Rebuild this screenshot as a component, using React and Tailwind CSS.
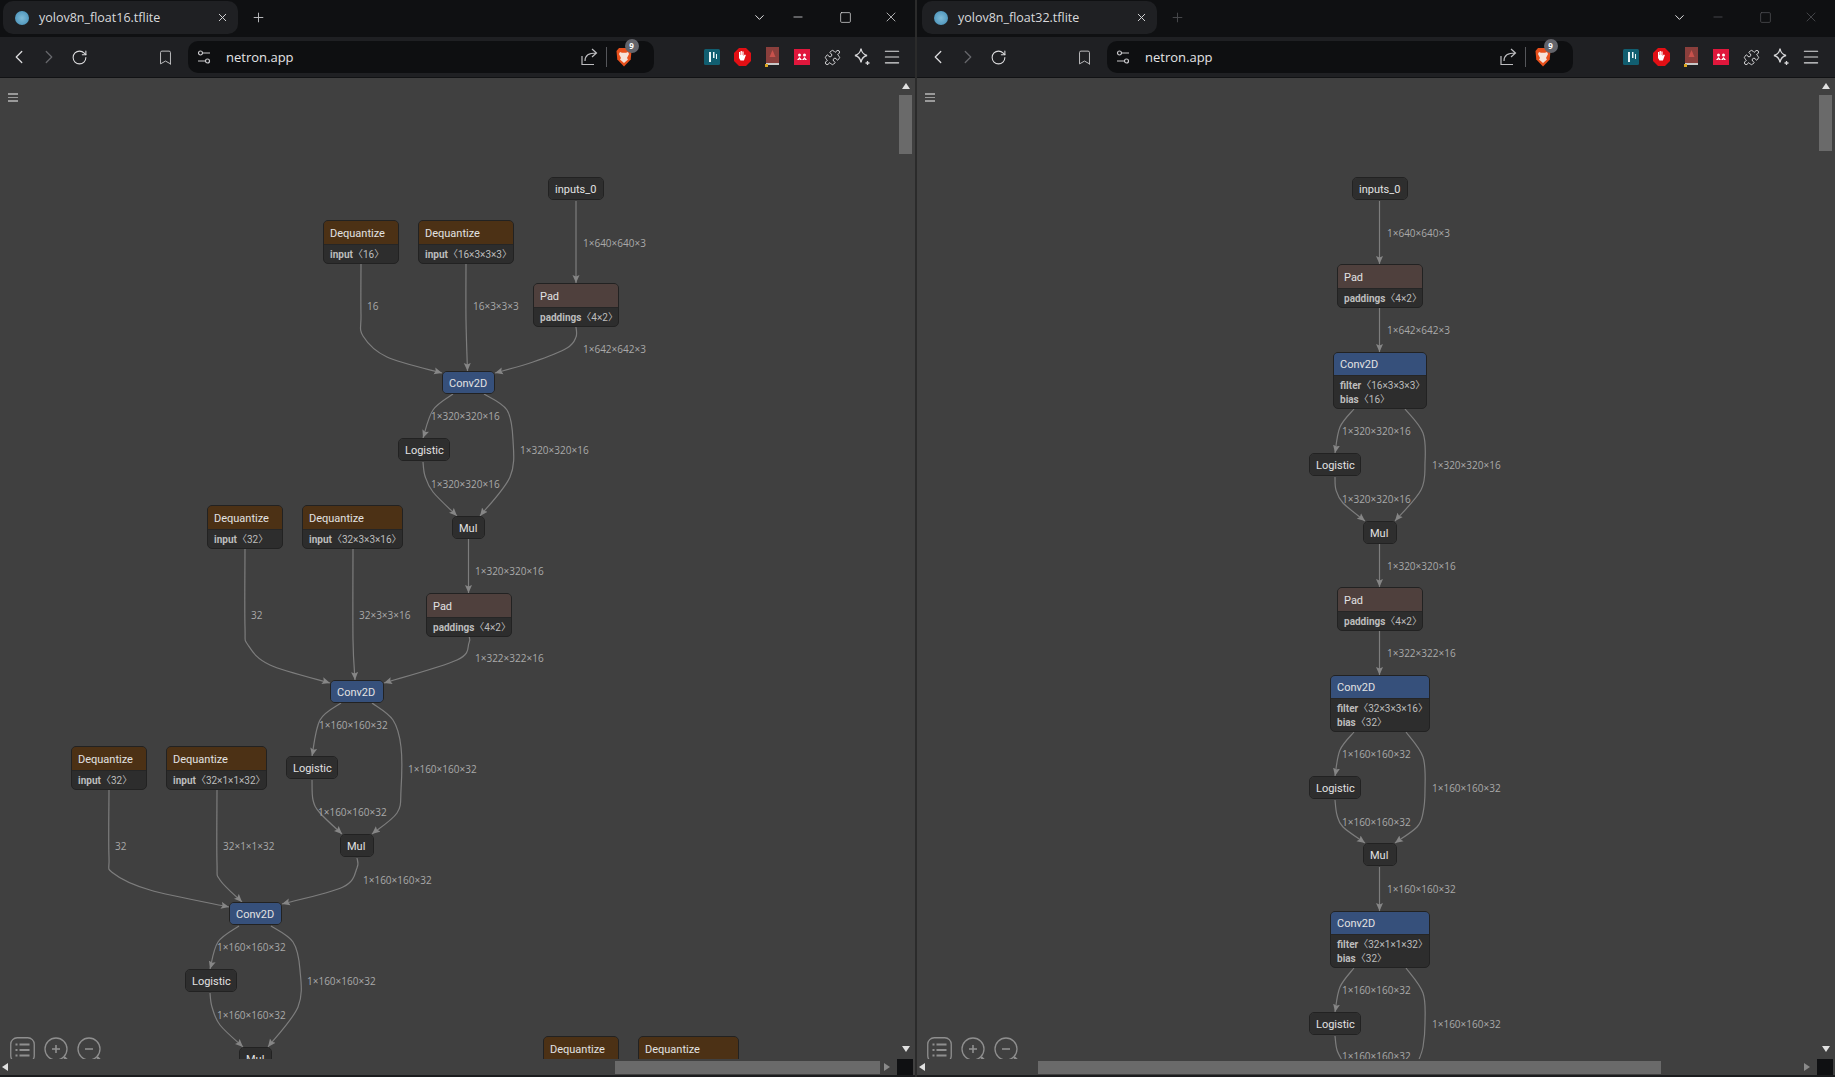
import React from 'react';
import { ChevronLeft, ChevronRight, ChevronDown, RotateCw, Bookmark, Puzzle, Menu, X, Plus, Minus, Square } from 'lucide-react';

// all graph coordinates are page pixels, the window offset gets subtracted when drawing
const CANVAS_TOP = 78;

const deq = (x, y, w, val) => ({ x, y, w, title: 'Dequantize', kind: 'deq', attrs: [['input', val]] });
const pad = (x, y) => ({ x, y, w: 86, title: 'Pad', kind: 'pad', attrs: [['paddings', '4×2']] });
const plain = (x, y, w, title) => ({ x, y, w, title, kind: 'plain', attrs: [] });
const conv = (x, y, w) => ({ x, y, w, title: 'Conv2D', kind: 'conv', attrs: [] });
const convAttrs = (x, y, w, filter, bias) => ({
  x,
  y,
  w,
  title: 'Conv2D',
  kind: 'convAttrs',
  attrs: [['filter', filter], ['bias', bias]],
});

const leftNodes = [
  plain(548, 177, 56, 'inputs_0'),
  deq(323, 220, 76, '16'),
  deq(418, 220, 96, '16×3×3×3'),
  pad(533, 283),
  conv(442, 371, 53),
  plain(398, 438, 52, 'Logistic'),
  plain(452, 516, 33, 'Mul'),
  pad(426, 593),
  deq(207, 505, 76, '32'),
  deq(302, 505, 101, '32×3×3×16'),
  conv(330, 680, 54),
  plain(286, 756, 52, 'Logistic'),
  plain(340, 834, 34, 'Mul'),
  deq(71, 746, 76, '32'),
  deq(166, 746, 101, '32×1×1×32'),
  conv(229, 902, 53),
  plain(185, 969, 52, 'Logistic'),
  plain(239, 1047, 33, 'Mul'),
  deq(543, 1036, 76, '?'),
  deq(638, 1036, 101, '?'),
];

const leftEdges = [
  [[576, 201], [576, 283]],
  [[361, 264], [361, 315], [363, 336], [387, 357], [442, 373]],
  [[466, 264], [466, 320], [467.5, 371]],
  [[576, 327], [576, 337], [567, 348], [533, 362], [495, 373]],
  [[453, 394], [433, 410], [423, 438]],
  [[484, 394], [507, 410], [513, 440], [510, 477], [480, 516]],
  [[423, 462], [425, 476], [433, 492], [457, 516]],
  [[468.5, 539], [468.5, 593]],
  [[469, 636], [469, 643], [457, 660], [384, 683]],
  [[245, 549], [245, 627], [248, 645], [270, 665], [330, 683]],
  [[353, 549], [353, 640], [355, 680]],
  [[341, 703], [320, 720], [312, 756]],
  [[372, 703], [393, 720], [401, 747], [401, 790], [397, 813], [372, 834]],
  [[312, 780], [313, 800], [320, 813], [342, 834]],
  [[357, 858], [357, 868], [343, 887], [282, 904]],
  [[109, 790], [109, 857], [113, 873], [150, 890], [229, 907]],
  [[217, 790], [217, 863], [220, 880], [242, 902]],
  [[239, 926], [218, 942], [210, 969]],
  [[271, 926], [293, 942], [300, 970], [298, 1007], [268, 1047]],
  [[210, 993], [212, 1007], [220, 1025], [243, 1047]],
];

const leftLabels = [
  [583, 243, '1×640×640×3'],
  [367, 306, '16'],
  [473, 306, '16×3×3×3'],
  [583, 349, '1×642×642×3'],
  [431, 416, '1×320×320×16'],
  [520, 450, '1×320×320×16'],
  [431, 484, '1×320×320×16'],
  [475, 571, '1×320×320×16'],
  [475, 658, '1×322×322×16'],
  [251, 615, '32'],
  [359, 615, '32×3×3×16'],
  [319, 725, '1×160×160×32'],
  [408, 769, '1×160×160×32'],
  [318, 812, '1×160×160×32'],
  [363, 880, '1×160×160×32'],
  [115, 846, '32'],
  [223, 846, '32×1×1×32'],
  [217, 947, '1×160×160×32'],
  [307, 981, '1×160×160×32'],
  [217, 1015, '1×160×160×32'],
];

const rightNodes = [
  plain(1352, 177, 56, 'inputs_0'),
  pad(1337, 264),
  convAttrs(1333, 352, 94, '16×3×3×3', '16'),
  plain(1309, 453, 52, 'Logistic'),
  plain(1363, 521, 34, 'Mul'),
  pad(1337, 587),
  convAttrs(1330, 675, 100, '32×3×3×16', '32'),
  plain(1309, 776, 52, 'Logistic'),
  plain(1363, 843, 34, 'Mul'),
  convAttrs(1330, 911, 100, '32×1×1×32', '32'),
  plain(1309, 1012, 52, 'Logistic'),
];

const rightEdges = [
  [[1379.5, 201], [1379.5, 264]],
  [[1379.5, 308], [1379.5, 352]],
  [[1354, 409], [1340, 427], [1335, 453]],
  [[1405, 409], [1423, 433], [1425, 463], [1421, 490], [1395, 521]],
  [[1335, 477], [1336, 490], [1343, 503], [1365, 521]],
  [[1379.5, 544], [1379.5, 587]],
  [[1379.5, 631], [1379.5, 675]],
  [[1354, 732], [1340, 750], [1335, 776]],
  [[1406, 732], [1423, 757], [1425, 790], [1423, 813], [1417, 827], [1395, 843]],
  [[1335, 800], [1337, 815], [1343, 827], [1365, 843]],
  [[1379.5, 867], [1379.5, 911]],
  [[1354, 968], [1340, 987], [1335, 1012]],
  [[1406, 968], [1423, 993], [1425, 1023], [1423, 1047], [1418, 1062]],
  [[1335, 1036], [1337, 1050], [1343, 1062]],
];

const rightLabels = [
  [1387, 233, '1×640×640×3'],
  [1387, 330, '1×642×642×3'],
  [1342, 431, '1×320×320×16'],
  [1432, 465, '1×320×320×16'],
  [1342, 499, '1×320×320×16'],
  [1387, 566, '1×320×320×16'],
  [1387, 653, '1×322×322×16'],
  [1342, 754, '1×160×160×32'],
  [1432, 788, '1×160×160×32'],
  [1342, 822, '1×160×160×32'],
  [1387, 889, '1×160×160×32'],
  [1342, 990, '1×160×160×32'],
  [1432, 1024, '1×160×160×32'],
  [1342, 1056, '1×160×160×32'],
];

const headerClass = {
  deq: 'h-[22.5px] bg-[#4c3115]',
  pad: 'h-[22.5px] bg-[#4f403d]',
  conv: 'h-[21px] bg-[#36507b]',
  convAttrs: 'h-[21.5px] bg-[#36507b]',
  plain: 'h-[21px] bg-[#2e2e2e]',
};

// catmull-rom through the traced points
const edgePath = (pts) => {
  let d = `M${pts[0][0]} ${pts[0][1]}`;
  for (let i = 0; i < pts.length - 1; i++) {
    const p0 = pts[i - 1] || pts[i];
    const p1 = pts[i];
    const p2 = pts[i + 1];
    const p3 = pts[i + 2] || p2;
    const c1x = p1[0] + (p2[0] - p0[0]) / 6;
    const c1y = p1[1] + (p2[1] - p0[1]) / 6;
    const c2x = p2[0] - (p3[0] - p1[0]) / 6;
    const c2y = p2[1] - (p3[1] - p1[1]) / 6;
    d += ` C${c1x} ${c1y} ${c2x} ${c2y} ${p2[0]} ${p2[1]}`;
  }
  return d;
};

const GraphNode = ({ node, offsetX }) => (
  <div
    className="absolute box-border overflow-hidden rounded-[5px] border-[1.5px] border-[#222222] bg-[#2d2d2d] font-['Roboto','Noto_Sans_CJK_SC',sans-serif]"
    style={{ left: node.x - offsetX, top: node.y - CANVAS_TOP, width: node.w }}
  >
    <div
      className={`flex items-center pt-[3px] pl-[6px] text-[11px] whitespace-nowrap text-[#e2e2e2] ${headerClass[node.kind]}`}
    >
      {node.title}
    </div>
    {node.attrs.length > 0 && (
      <div className="flex flex-col border-t-[1.5px] border-[#262626] pt-[3px] pb-[1px] pl-[6px]">
        {node.attrs.map(([name, val]) => (
          <div key={name} className="h-[14px] text-[10px] leading-[14px] whitespace-nowrap text-[#bdbdbd]">
            <span className="font-bold">{name}</span>
            <span>〈{val}〉</span>
          </div>
        ))}
      </div>
    )}
  </div>
);

const Tune = () => (
  <svg width="14" height="16" viewBox="0 0 14 16" fill="none" stroke="#c9c9cc" strokeWidth="1.2">
    <circle cx="3.5" cy="4" r="2" />
    <path d="M6 4h7M1 12h7" />
    <circle cx="10.5" cy="12" r="2" />
  </svg>
);

const ShareIcon = () => (
  <svg width="18" height="20" viewBox="0 0 18 20" fill="none" stroke="#bdbdc0" strokeWidth="1.2">
    <path d="M1 9v8.5h12" />
    <path d="M4 14c0-6 4-8 11-8M11 2l4.5 4-4.5 4" />
  </svg>
);

const BraveIcon = () => (
  <svg width="16" height="20" viewBox="0 0 16 20">
    <path d="M3 1h10l2.5 3-.8 8.5L8 19.5 1.3 12.5.5 4z" fill="#e8501c" />
    <path d="M4 5l2 .8h4L12 5l1 2-2 4 1 1.5-4 3.5-4-3.5L5 11 3 7z" fill="#f6e3da" />
  </svg>
);

const StarIcon = () => (
  <svg width="18" height="20" viewBox="0 0 18 20" fill="none" stroke="#d6d6d8" strokeWidth="1.3">
    <path d="M8 1.5c.6 4 2 6 6 7-4 1-5.400 3-6 7-.6-4-2-6-6-7 4-1 5.400-3 6-7z" />
    <path d="M14.500 14v4M12.500 16h4" />
  </svg>
);

const ExtTeal = () => (
  <svg width="16" height="16" viewBox="0 0 16 16">
    <rect width="16" height="16" rx="1.5" fill="#115e70" />
    <path d="M5 3h2v10H5zM9 3h1.5v6H9zM12 5h1v5h-1z" fill="#eaf5f7" />
  </svg>
);

const ExtStop = () => (
  <svg width="17" height="18" viewBox="0 0 17 18">
    <path d="M5 0h7l5 5v8l-5 5H5l-5-5V5z" fill="#e20f14" />
    <path d="M5 7V4h1.2v3h.4V3h1.3v4h.4V3.4h1.3V8l1.2-1.5 1.1.6-2 5.4H6.5L5 10z" fill="#fff" />
  </svg>
);

const ExtBook = () => (
  <svg width="14" height="20" viewBox="0 0 14 20">
    <rect x="1" y="0" width="13" height="16" fill="#8a3f3c" />
    <path d="M7.5 3l3 7h-6z" fill="#c9524c" />
    <rect x="1" y="16" width="13" height="2" fill="#c8c8c8" />
    <rect x="0" y="17" width="3" height="3" fill="#d9a521" />
  </svg>
);

const ExtRed = () => (
  <svg width="16" height="16" viewBox="0 0 16 16">
    <rect width="16" height="16" fill="#e0173c" />
    <circle cx="5.5" cy="6" r="1.5" fill="#fff" />
    <circle cx="10.5" cy="6" r="1.5" fill="#fff" />
    <path d="M3 11l2.5-3L8 11l2.5-3 2.5 3h-2l-.5-1-.5 1H6l-.5-1-.5 1z" fill="#fff" />
  </svg>
);

const Slot = ({ children, className = '' }) => (
  <div className={`flex h-[30px] w-[30px] shrink-0 items-center justify-center ${className}`}>{children}</div>
);

const TabStrip = ({ title, active, shift }) => (
  <div className={`flex h-[37px] shrink-0 items-start bg-[#0f1012] ${shift}`}>
    <div className="mt-[1px] ml-[3px] flex h-[33px] w-[235px] items-center rounded-[10px] bg-[#1f2023] pr-[9px] pl-[12px]">
      <div className="h-[14px] w-[14px] shrink-0 rounded-full bg-radial from-[#7fbad6] to-[#3f8cb5]" />
      <span className="mt-[2px] ml-[10px] text-[12.5px] whitespace-nowrap text-[#d9d9dc]">{title}</span>
      <X className="ml-auto text-[#d6d6d8]" size={13} strokeWidth={1.8} />
    </div>
    <Plus className={`mt-[10px] ml-[13px] ${active ? 'text-[#c0c0c3]' : 'text-[#4a4a4d]'}`} size={15} strokeWidth={1.5} />
    <div className="ml-auto flex h-[34px] items-center pr-[12px]">
      <div className="flex w-[24px] justify-center">
        <ChevronDown className="text-[#e5e5e7]" size={15} strokeWidth={1.6} />
      </div>
      <div className="ml-[15px] flex w-[24px] justify-center">
        <Minus className={active ? 'text-[#e5e5e7]' : 'text-[#55565a]'} size={14} strokeWidth={1.3} />
      </div>
      <div className="ml-[23px] flex w-[24px] justify-center">
        <Square className={active ? 'text-[#e5e5e7]' : 'text-[#55565a]'} size={13} strokeWidth={1.3} />
      </div>
      <div className="ml-[22px] flex w-[24px] justify-center">
        <X className={active ? 'text-[#e5e5e7]' : 'text-[#55565a]'} size={16} strokeWidth={1.1} />
      </div>
    </div>
  </div>
);

const Toolbar = ({ pad }) => (
  <div className={`flex h-[41px] shrink-0 items-center border-b border-[#111214] bg-[#1f2023] ${pad}`}>
    <Slot><ChevronLeft className="text-[#dcdcde]" size={22} strokeWidth={1.4} /></Slot>
    <Slot><ChevronRight className="text-[#66676b]" size={22} strokeWidth={1.4} /></Slot>
    <Slot><RotateCw className="text-[#dcdcde]" size={17} strokeWidth={1.5} /></Slot>
    <Slot className="ml-[56px]"><Bookmark className="text-[#c8c8ca]" size={17} strokeWidth={1.3} /></Slot>
    <div className="ml-[8px] flex h-[32px] w-[466px] items-center rounded-[10px] bg-[#0e0f11] pl-[9px]">
      <Tune />
      <span className="mt-[2px] ml-[15px] text-[13px] text-[#e4e4e6]">netron.app</span>
      <div className="ml-[287px]"><ShareIcon /></div>
      <div className="ml-[7px] h-[20px] w-px bg-[#55565a]" />
      <div className="relative ml-[9px]">
        <BraveIcon />
        <div className="absolute top-[-8px] left-[9px] flex h-[14px] w-[14px] items-center justify-center rounded-full bg-[#63646b] text-[8px] font-bold text-white">
          9
        </div>
      </div>
    </div>
    <Slot className="ml-[43px]"><ExtTeal /></Slot>
    <Slot><ExtStop /></Slot>
    <Slot><ExtBook /></Slot>
    <Slot><ExtRed /></Slot>
    <Slot><Puzzle className="text-[#d6d6d8]" size={17} strokeWidth={1.4} /></Slot>
    <Slot><StarIcon /></Slot>
    <Slot><Menu className="text-[#e0e0e2]" size={20} strokeWidth={1.3} /></Slot>
  </div>
);

const Arrow = ({ dir }) => {
  const points = {
    up: '0,6 4,0 8,6',
    down: '0,0 8,0 4,6',
    left: '6,0 6,8 0,4',
    right: '0,0 6,4 0,8',
  }[dir];
  return (
    <svg width="8" height="8" viewBox="0 0 8 8">
      <polygon points={points} fill={dir === 'right' ? '#8a8a8a' : '#e0e0e0'} />
    </svg>
  );
};

const ListButton = () => (
  <svg width="25" height="26" viewBox="0 0 25 26" fill="none" stroke="#8f8f8f">
    <rect x="0.75" y="0.75" width="23.500" height="24.500" rx="6.500" strokeWidth="1.300" />
    <path d="M5.500 7.500h2M5.500 13h2M5.500 18.500h2" strokeWidth="2.200" />
    <path d="M9.500 7.500h10M9.500 13h10M9.500 18.500h10" strokeWidth="1.800" />
  </svg>
);

const ZoomButton = ({ minus }) => (
  <svg width="26" height="26" viewBox="0 0 26 26" fill="none" stroke="#8f8f8f" strokeWidth="1.3">
    <circle cx="12" cy="12" r="11" />
    <path d="M8 12h8" strokeWidth="1.6" />
    {!minus && <path d="M12 8v8" strokeWidth="1.6" />}
    <path d="M20 20l3.5 3.5" strokeWidth="2.4" />
  </svg>
);

const GraphTools = () => (
  <div className="absolute bottom-[-4px] left-[10px] flex items-center">
    <ListButton />
    <div className="ml-[9px] flex gap-[7px]">
      <ZoomButton />
      <ZoomButton minus />
    </div>
  </div>
);

const Canvas = ({ nodes, edges, labels, offsetX, markerId }) => (
  <div className="relative flex-1 overflow-hidden bg-[#404040] font-['Open_Sans',sans-serif]">
    <svg className="absolute top-0 left-0 h-full w-full" fill="none">
      <defs>
        <marker id={markerId} markerUnits="userSpaceOnUse" markerWidth="9" markerHeight="8" refX="8" refY="4" orient="auto">
          <path d="M0 0.5 L8 4 L0 7.5 L1.5 4 Z" fill="#868686" />
        </marker>
      </defs>
      <g transform={`translate(${-offsetX} ${-CANVAS_TOP})`}>
        {edges.map((pts, i) => {
          const last = pts[pts.length - 1];
          return (
            <path
              key={i}
              d={edgePath(pts)}
              stroke="#7d7d7d"
              strokeWidth="1.2"
              markerEnd={last[1] < 1060 ? `url(#${markerId})` : undefined}
            />
          );
        })}
      </g>
    </svg>
    {nodes.map((n, i) => (
      <GraphNode key={i} node={n} offsetX={offsetX} />
    ))}
    {labels.map(([x, y, text], i) => (
      <div
        key={i}
        className="absolute -translate-y-1/2 text-[10px] leading-[12px] whitespace-nowrap text-[#a9a9a9]"
        style={{ left: x - offsetX, top: y - CANVAS_TOP }}
      >
        {text}
      </div>
    ))}
    <div className="absolute top-[15px] left-[8px] flex w-[10px] flex-col gap-[2px]">
      <div className="h-[1.5px] bg-[#9a9a9a]" />
      <div className="h-[1.5px] bg-[#9a9a9a]" />
      <div className="h-[1.5px] bg-[#9a9a9a]" />
    </div>
    <GraphTools />
  </div>
);

const BrowserWindow = ({ title, active, widthClass, offsetX, nodes, edges, labels, markerId, shift, toolbarPad, thumbLeft, thumbWidth, thumbHeight }) => (
  <div className={`flex h-full shrink-0 flex-col ${widthClass}`}>
    <TabStrip title={title} active={active} shift={shift} />
    <Toolbar pad={toolbarPad} />
    <div className="flex min-h-0 flex-1">
      <Canvas nodes={nodes} edges={edges} labels={labels} offsetX={offsetX} markerId={markerId} />
      <div className="flex w-[18px] shrink-0 flex-col items-center bg-[#404040] pr-[1px]">
        <div className="mt-[6px] mb-[5px] flex h-[6px] items-center"><Arrow dir="up" /></div>
        <div className="w-[13px] bg-[#6a6a6a]" style={{ height: thumbHeight }} />
        <div className="mt-auto mb-[6px] flex h-[6px] items-center"><Arrow dir="down" /></div>
      </div>
    </div>
    <div className="flex h-[16px] shrink-0 items-center bg-[#404040]">
      <div className="relative flex h-full flex-1 items-center pl-[2px]">
        <Arrow dir="left" />
        <div className="absolute top-[2px] h-[13px] bg-[#6a6a6a]" style={{ left: thumbLeft, width: thumbWidth }} />
        <div className="absolute top-[4px] right-[5px]"><Arrow dir="right" /></div>
      </div>
      <div className="h-full w-[16px] bg-[#0f1012]" />
      <div className="w-[2px]" />
    </div>
    <div className="h-[2px] shrink-0 bg-[#1b1c1e]" />
  </div>
);

const App = () => (
  <div className="flex h-[1077px] w-[1835px] overflow-hidden bg-[#2b2b2b] font-['Open_Sans',sans-serif]">
    <BrowserWindow
      title="yolov8n_float16.tflite"
      active
      widthClass="w-[915px]"
      offsetX={0}
      nodes={leftNodes}
      edges={leftEdges}
      labels={leftLabels}
      markerId="arrow-left"
      shift=""
      toolbarPad="pl-[4px]"
      thumbLeft={615}
      thumbWidth={265}
      thumbHeight={59}
    />
    <div className="w-[2px] shrink-0 bg-[#2b2b2b]" />
    <BrowserWindow
      title="yolov8n_float32.tflite"
      active={false}
      widthClass="w-[918px]"
      offsetX={917}
      nodes={rightNodes}
      edges={rightEdges}
      labels={rightLabels}
      markerId="arrow-right"
      shift="pl-[2px]"
      toolbarPad="pl-[6px]"
      thumbLeft={121}
      thumbWidth={623}
      thumbHeight={56}
    />
  </div>
);

export default App;
